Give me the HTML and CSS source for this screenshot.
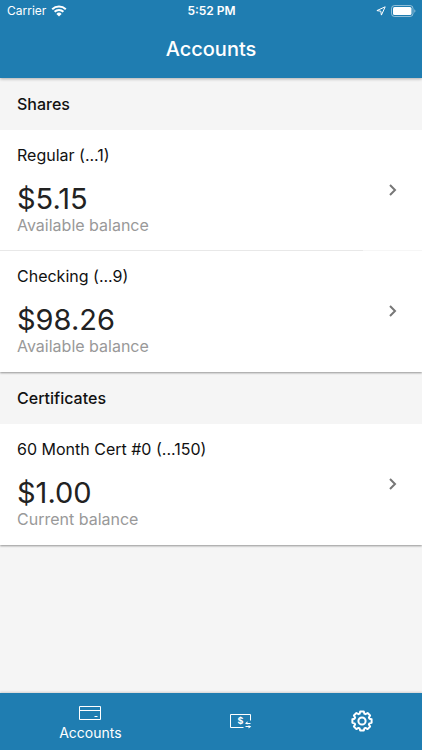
FILE: index.html
```html
<!DOCTYPE html>
<html lang="en">
<head>
    <meta charset="UTF-8">
    <meta name="viewport" content="width=device-width, initial-scale=1.0">
    <title>Accounts</title>
    <link rel="stylesheet" href="styles.css">
</head>
<body>
    <header class="app-header">
        <div class="status-bar">
            <div class="status-left">
                <span>Carrier</span>
                <svg class="wifi" viewBox="0 0 16 12" aria-hidden="true">
                    <path d="M1.2 4.2a9.8 9.8 0 0 1 13.6 0M3.6 6.8a6.3 6.3 0 0 1 8.8 0" fill="none" stroke="currentColor" stroke-width="2"/>
                    <path d="M8 11.6 5.4 8.9a3.7 3.7 0 0 1 5.2 0z" fill="currentColor"/>
                </svg>
            </div>
            <span class="status-time">5:52 PM</span>
            <div class="status-right">
                <svg class="location" viewBox="0 0 10 10" aria-hidden="true">
                    <path d="M9.2.8.9 4.6l3.9.6.6 3.9z" fill="none" stroke="currentColor" stroke-linejoin="round"/>
                </svg>
                <svg class="battery" viewBox="0 0 25 12" aria-hidden="true">
                    <rect x=".5" y=".5" width="21.5" height="11" rx="3" fill="none" stroke="currentColor" opacity=".5"/>
                    <rect x="2" y="2" width="18.5" height="8" rx="1.5" fill="currentColor"/>
                    <path d="M23.3 4.2v3.6c1.5-.6 1.5-3 0-3.6z" fill="currentColor" opacity=".5"/>
                </svg>
            </div>
        </div>
        <h1>Accounts</h1>
    </header>

    <main>
        <section class="group">
            <h2>Shares</h2>
            <div class="card">
                <a class="account" href="#regular">
                    <div>
                        <h3>Regular (...1)</h3>
                        <p class="amount">$5.15</p>
                        <p class="note">Available balance</p>
                    </div>
                    <svg class="chevron" viewBox="0 0 8 12" aria-hidden="true"><path d="m1 1 5 5-5 5"/></svg>
                </a>
                <a class="account" href="#checking">
                    <div>
                        <h3>Checking (...9)</h3>
                        <p class="amount">$98.26</p>
                        <p class="note">Available balance</p>
                    </div>
                    <svg class="chevron" viewBox="0 0 8 12" aria-hidden="true"><path d="m1 1 5 5-5 5"/></svg>
                </a>
            </div>
        </section>

        <section class="group">
            <h2>Certificates</h2>
            <div class="card">
                <a class="account" href="#certificate">
                    <div>
                        <h3>60 Month Cert #0 (...150)</h3>
                        <p class="amount">$1.00</p>
                        <p class="note">Current balance</p>
                    </div>
                    <svg class="chevron" viewBox="0 0 8 12" aria-hidden="true"><path d="m1 1 5 5-5 5"/></svg>
                </a>
            </div>
        </section>
    </main>

    <nav class="tabs">
        <a class="tab active" href="#accounts">
            <svg class="card-icon" viewBox="0 0 22 16" aria-hidden="true">
                <path d="M.5 1.5h21v13H.5zM.5 5.5h21M15.5 11.5h3"/>
            </svg>
            <span>Accounts</span>
        </a>
        <a class="tab" href="#transfer" aria-label="Transfer">
            <svg class="transfer-icon" viewBox="0 0 22 16" aria-hidden="true">
                <path d="M20.5 7.5v-6H.5v13h13"/>
                <path d="M16 10.5h4.5M15.5 13.5H20"/>
                <path class="solid" d="M17.5 8.3v3.2L15 10.5zM18.5 12.2v3.2l2.8-1.9z"/>
                <text x="10.5" y="11">$</text>
            </svg>
        </a>
        <a class="tab" href="#settings" aria-label="Settings">
            <svg class="gear-icon" viewBox="0 0 22 22" aria-hidden="true">
                <path d="M9.2 1.4h3.6l.6 2.3 1.1.5 2.1-1.2 2.5 2.5-1.2 2.1.5 1.1 2.2.6v3.5l-2.2.6-.5 1.1 1.2 2.1-2.5 2.5-2.1-1.2-1.1.5-.6 2.2H9.2l-.6-2.2-1.1-.5-2.1 1.2-2.5-2.5 1.2-2.1-.5-1.1-2.2-.6V9.3l2.2-.6.5-1.1-1.2-2.1L5.4 3l2.1 1.2 1.1-.5z"/>
                <circle cx="11" cy="11" r="3.6"/>
            </svg>
        </a>
    </nav>
</body>
</html>
```

FILE: styles.css
```css
* {
    box-sizing: border-box;
}

body {
    margin: 0;
    min-height: 100vh;
    display: flex;
    flex-direction: column;
    background-color: #f5f5f5;
    color: #111;
    font-family: Inter, "Liberation Sans", sans-serif;
}

h1, h2, h3, p {
    margin: 0;
}

a {
    color: inherit;
    text-decoration: none;
}

/* Header */
.app-header {
    background-color: #1f7db1;
    color: white;
    box-shadow: 0 1px 3px rgba(0, 0, 0, 0.3);
}

.status-bar {
    display: grid;
    grid-template-columns: 1fr auto 1fr;
    align-items: center;
    height: 21px;
    padding: 0 6px 0 7px;
    font-size: 12px;
}

.status-left, .status-right {
    display: flex;
    align-items: center;
    gap: 5px;
}

.status-right {
    justify-content: flex-end;
}

.status-time {
    font-weight: 600;
}

.wifi {
    width: 16px;
    height: 12px;
}

.location {
    width: 10px;
    height: 10px;
}

.battery {
    width: 25px;
    height: 12px;
}

.app-header h1 {
    padding-bottom: 1px;
    font-size: 20px;
    font-weight: 500;
    line-height: 56px;
    text-align: center;
}

/* Account list */
main {
    flex: 1;
}

.group h2 {
    padding: 14px 17px;
    font-size: 16px;
    font-weight: 500;
    line-height: 24px;
}

.card {
    background-color: white;
    box-shadow: 0 1px 2px rgba(0, 0, 0, 0.4);
    clip-path: inset(0 0 -6px 0);
}

.account {
    display: flex;
    align-items: center;
    justify-content: space-between;
    padding: 15px 25px 16px 17px;
}

/* divider fades out under the chevron */
.account:not(:last-child) {
    background: linear-gradient(to right, #e8e8e8 86%, #f6f6f6 86%) bottom / 100% 1px no-repeat;
}

.account h3 {
    font-size: 16px;
    font-weight: 400;
    line-height: 20px;
}

.amount {
    margin-top: 18px;
    color: #222;
    font-size: 29px;
    line-height: 32px;
}

.note {
    color: #999;
    font-size: 16px;
    line-height: 20px;
}

.chevron {
    width: 8px;
    height: 12px;
    fill: none;
    stroke: #777;
    stroke-width: 2;
}

/* Bottom tabs */
.tabs {
    position: sticky;
    bottom: 0;
    display: flex;
    height: 57px;
    padding-bottom: 1px;
    background-color: #1f7db1;
    color: white;
    box-shadow: 0 -1px 2px rgba(0, 0, 0, 0.15);
}

.tab {
    flex: 2;
    display: flex;
    flex-direction: column;
    align-items: center;
    justify-content: center;
    gap: 3px;
    font-size: 14px;
    line-height: 18px;
}

.tab.active {
    flex: 3;
    justify-content: flex-start;
    padding-top: 12px;
}

.tab svg {
    fill: none;
    stroke: white;
}

.card-icon, .transfer-icon {
    width: 22px;
    height: 16px;
}

.tab .solid {
    fill: white;
    stroke: none;
}

.transfer-icon text {
    fill: white;
    stroke: none;
    font-size: 9px;
    font-weight: 700;
    text-anchor: middle;
}

.gear-icon {
    width: 22px;
    height: 22px;
    stroke-width: 2;
    stroke-linejoin: round;
}
```
